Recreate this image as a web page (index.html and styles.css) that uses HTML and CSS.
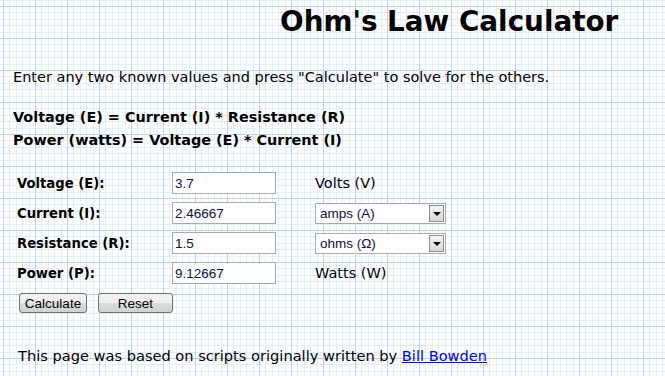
FILE: index.html
```html
<!DOCTYPE html>
<html lang="en">
<head>
<meta charset="UTF-8" />
<title>Ohm's Law Calculator</title>
<link rel="stylesheet" href="styles.css">
</head>
<body>

<h1 class="title">Ohm's Law Calculator</h1>

<p class="intro">Enter any two known values and press "Calculate" to solve for the others.</p>

<div class="formulas">
  <div>Voltage (E) = Current (I) * Resistance (R)</div>
  <div>Power (watts) = Voltage (E) * Current (I)</div>
</div>

<form class="calc" id="ohmForm">
  <div class="row">
    <label for="volts">Voltage (E):</label>
    <input type="text" id="volts" value="3.7" />
    <span class="unit">Volts (V)</span>
  </div>
  <div class="row">
    <label for="amps">Current (I):</label>
    <input type="text" id="amps" value="2.46667" />
    <div class="select"><span>amps (A)</span><i class="arrow"></i></div>
  </div>
  <div class="row">
    <label for="ohms">Resistance (R):</label>
    <input type="text" id="ohms" value="1.5" />
    <div class="select"><span>ohms (Ω)</span><i class="arrow"></i></div>
  </div>
  <div class="row">
    <label for="watts">Power (P):</label>
    <input type="text" id="watts" value="9.12667" />
    <span class="unit">Watts (W)</span>
  </div>
  <div class="buttons">
    <button type="button" class="btn calc-btn">Calculate</button>
    <button type="reset" class="btn reset-btn">Reset</button>
  </div>
</form>

<p class="credit">This page was based on scripts originally written by <a href="#">Bill Bowden</a></p>

</body>
</html>
```

FILE: styles.css
```css
html, body {
  margin: 0;
  padding: 0;
}

body {
  width: 665px;
  height: 376px;
  overflow: hidden;
  font-family: "DejaVu Sans", sans-serif;
  color: #000;
  background-color: #fff;
  background-image:
    linear-gradient(to right, #bcd3f5 1px, transparent 1px),
    linear-gradient(to bottom, #bcd3f5 1px, transparent 1px),
    repeating-linear-gradient(to right, #e4eefc 0, #e4eefc 1px, transparent 1px, transparent 6.4px),
    repeating-linear-gradient(to bottom, #e4eefc 0, #e4eefc 1px, transparent 1px, transparent 6.4px);
  background-size: 32px 32px;
  background-position: 3px 6px;
}

.title {
  margin: 0;
  padding: 2px 0 0 280px;
  font-size: 27.8px;
  line-height: 40px;
  font-weight: bold;
}

.intro {
  margin: 25px 0 0 13px;
  font-size: 14.5px;
  line-height: 20px;
}

.formulas {
  margin: 19px 0 0 13px;
  font-size: 14.4px;
  font-weight: bold;
  line-height: 23px;
}

.calc {
  margin: 16px 0 0 17px;
}

.row {
  display: flex;
  align-items: center;
  height: 30px;
}

.row label {
  width: 155px;
  font-size: 13.2px;
  font-weight: bold;
}

.row input {
  width: 104px;
  height: 22px;
  box-sizing: border-box;
  margin: 0 39px 0 0;
  padding: 1px 2px 0;
  border: 1px solid #a5acb2;
  background: #fff;
  font-family: "Liberation Sans", Arial, sans-serif;
  font-size: 13.5px;
  color: #10103a;
}

.unit {
  font-size: 14.5px;
}

.select {
  position: relative;
  width: 131px;
  height: 21px;
  box-sizing: border-box;
  border: 1px solid #a5acb2;
  background: #fff;
  font-family: "Liberation Sans", Arial, sans-serif;
  font-size: 13.5px;
  color: #10103a;
  display: flex;
  align-items: center;
  padding-left: 4px;
}

.arrow {
  position: absolute;
  top: 1px;
  right: 1px;
  width: 15px;
  height: 17px;
  box-sizing: border-box;
  border: 1px solid #8e8e8e;
  background: linear-gradient(#f6f6f6, #d6d6d6);
}

.arrow::after {
  content: "";
  position: absolute;
  left: 3px;
  top: 6px;
  border-left: 4px solid transparent;
  border-right: 4px solid transparent;
  border-top: 4px solid #000;
}

.buttons {
  display: flex;
  gap: 11px;
  margin-top: 5px;
  padding-left: 2px;
}

.btn {
  height: 20px;
  padding: 0;
  border: 1px solid #707070;
  border-radius: 3px;
  background: linear-gradient(#f4f4f4 0%, #ececec 50%, #dcdcdc 51%, #d2d2d2 100%);
  font-family: "Liberation Sans", Arial, sans-serif;
  font-size: 13.5px;
  color: #000;
}

.calc-btn {
  width: 68px;
}

.reset-btn {
  width: 75px;
}

.credit {
  margin: 34px 0 0 18px;
  font-size: 14.6px;
}

.credit a {
  color: #0000ee;
}
```
